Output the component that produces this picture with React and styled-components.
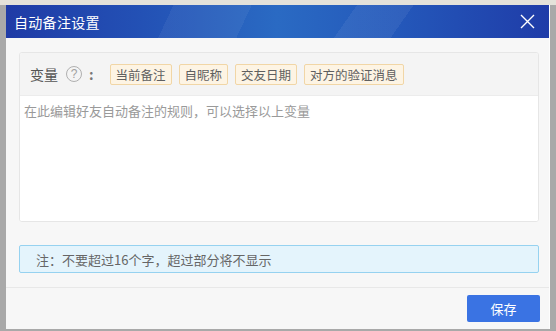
import React, { useState } from "react";
import styled, { createGlobalStyle, css } from "styled-components";

const GlobalStyle = createGlobalStyle`
  html, body {
    margin: 0;
    padding: 0;
    background: #ffffff;
    font-family: "Microsoft YaHei", "Noto Sans CJK SC", "Liberation Sans", sans-serif;
  }
  * { box-sizing: border-box; }
`;

const VARIABLES = ["当前备注", "自昵称", "交友日期", "对方的验证消息"];

const App = () => {
  const [rule, setRule] = useState("");

  return (
    <>
      <GlobalStyle />
      <Frame>
        <Dialog>
          <TitleBar>
            <Title>自动备注设置</Title>
            <CloseButton aria-label="关闭">
              <svg width="15" height="15" viewBox="0 0 15 15">
                <path d="M1 1 L14 14 M14 1 L1 14" stroke="#fff" strokeWidth="1.4" />
              </svg>
            </CloseButton>
          </TitleBar>
          <Body>
            <Panel>
              <VarRow>
                <VarLabel>变量</VarLabel>
                <HelpIcon>?</HelpIcon>
                <Colon>:</Colon>
                <Tags>
                  {VARIABLES.map((v) => (
                    <Tag key={v} onClick={() => setRule(rule + "{" + v + "}")}>
                      {v}
                    </Tag>
                  ))}
                </Tags>
              </VarRow>
              <Editor
                value={rule}
                onChange={(e) => setRule(e.target.value)}
                placeholder="在此编辑好友自动备注的规则，可以选择以上变量"
              />
            </Panel>
            <Note>注：不要超过16个字，超过部分将不显示</Note>
          </Body>
          <Footer>
            <SaveButton>保存</SaveButton>
          </Footer>
        </Dialog>
      </Frame>
    </>
  );
};

export default App;

const Frame = styled.div`
  width: 556px;
  height: 331px;
  background: #a9a9a9;
  border-top: 5px solid #e4e2da;
  padding: 0 6px 2px 6px;
  display: flex;
`;

const Dialog = styled.div`
  flex: 1;
  display: flex;
  flex-direction: column;
  background: #f7f7f7;
  border-right: 1px solid #fdfdfd;
`;

const TitleBar = styled.div`
  height: 33px;
  flex-shrink: 0;
  display: flex;
  align-items: center;
  justify-content: space-between;
  padding: 0 14px 0 8px;
  background:
    linear-gradient(115deg, rgba(255,255,255,0) 0%, rgba(255,255,255,0) 30%, rgba(255,255,255,0.05) 30%, rgba(255,255,255,0.05) 44%, rgba(255,255,255,0) 44%),
    linear-gradient(125deg, rgba(255,255,255,0) 62%, rgba(255,255,255,0.06) 62%, rgba(255,255,255,0.06) 72%, rgba(255,255,255,0) 72%),
    linear-gradient(90deg, #1f3ba6 0%, #2351b5 25%, #2a6ac3 50%, #2458ba 72%, #1f3ca8 100%);
`;

const Title = styled.h1`
  margin: 0;
  font-size: 14px;
  font-weight: normal;
  color: #ffffff;
  letter-spacing: 0.3px;
`;

const CloseButton = styled.button`
  border: 0;
  background: transparent;
  padding: 0;
  width: 16px;
  height: 16px;
  display: flex;
  align-items: center;
  justify-content: center;
  cursor: pointer;
`;

const Body = styled.div`
  flex: 1;
  display: flex;
  flex-direction: column;
  padding: 14px 10px 0 13px;
`;

const Panel = styled.div`
  height: 170px;
  display: flex;
  flex-direction: column;
  border: 1px solid #e6e6e6;
  border-radius: 3px;
  background: #ffffff;
  overflow: hidden;
`;

const VarRow = styled.div`
  height: 43px;
  flex-shrink: 0;
  display: flex;
  align-items: center;
  padding: 0 0 0 10px;
  background: #f4f4f4;
  border-bottom: 1px solid #ececec;
`;

const VarLabel = styled.span`
  font-size: 14px;
  color: #555555;
`;

const HelpIcon = styled.span`
  width: 16px;
  height: 16px;
  margin-left: 8px;
  border: 1px solid #b0b0b0;
  border-radius: 50%;
  font-size: 12px;
  line-height: 14px;
  text-align: center;
  color: #a0a0a0;
  font-family: "Liberation Sans", sans-serif;
`;

const Colon = styled.span`
  margin-left: 7px;
  font-size: 14px;
  font-weight: bold;
  color: #777777;
`;

const Tags = styled.div`
  display: flex;
  gap: 7px;
  margin-left: 16px;
`;

const Tag = styled.span`
  height: 21px;
  padding: 0 5px;
  display: flex;
  align-items: center;
  font-size: 12.5px;
  color: #5f5f5f;
  background: #fdf4e4;
  border: 1px solid #f1d6a6;
  border-radius: 2px;
  cursor: pointer;
`;

const Editor = styled.textarea`
  flex: 1;
  border: 0;
  resize: none;
  outline: none;
  padding: 5px 4px;
  font-family: inherit;
  font-size: 13px;
  color: #333333;
  background: #ffffff;

  &::placeholder {
    color: #9a9a9a;
  }
`;

const Note = styled.div`
  margin-top: 23px;
  height: 28px;
  display: flex;
  align-items: center;
  padding-left: 16px;
  font-size: 13px;
  color: #666666;
  background: #e4f4fc;
  border: 1px solid #96d2f0;
  border-radius: 2px;
`;

const Footer = styled.div`
  height: 42px;
  flex-shrink: 0;
  display: flex;
  align-items: center;
  justify-content: flex-end;
  padding: 0 9px 0 0;
  border-top: 1px solid #e8e8e8;
`;

const SaveButton = styled.button`
  width: 73px;
  height: 27px;
  border: 0;
  border-radius: 2px;
  background: #3a73e3;
  color: #ffffff;
  font-family: inherit;
  font-size: 13px;
  cursor: pointer;
  ${(props) =>
    props.disabled &&
    css`
      opacity: 0.6;
    `}
`;
